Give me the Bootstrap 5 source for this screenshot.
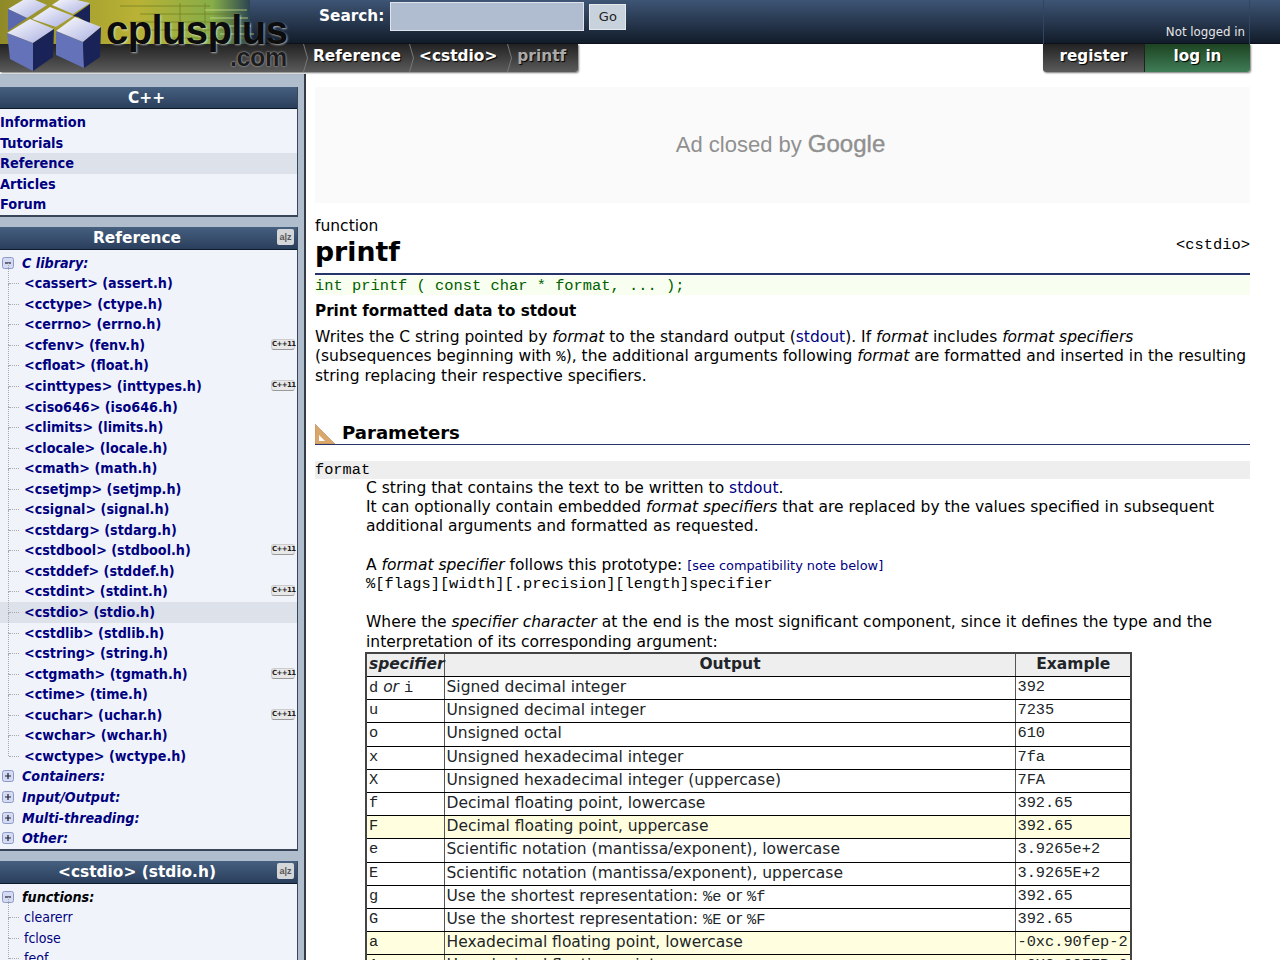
<!DOCTYPE html>
<html lang="en">
<head>
<meta charset="utf-8">
<title>printf - C++ Reference</title>
<link href="https://cdn.jsdelivr.net/npm/bootstrap@5.3.0/dist/css/bootstrap.min.css" rel="stylesheet">
<style>
html,body{height:100%;overflow:hidden}
body{font-family:"DejaVu Sans",Verdana,sans-serif;font-size:15.5px;line-height:19.2px;color:#000;background:#fff}
a{color:#000080;text-decoration:none}
.mono{font-family:"Liberation Mono","Courier New",monospace}
.site-head{height:74px;position:relative}
.top-strip{height:44px;background:linear-gradient(#3e5575,#121c2a);border-bottom:1px solid #0c121b}
.crumb-strip{height:30px}
.logo-art{position:absolute;left:0;top:0;width:300px;height:74px;z-index:2}
.logo-word{position:absolute;left:106px;top:8px;font:700 40px/44px "Liberation Sans",sans-serif;letter-spacing:-.6px;color:#0c0c0c;z-index:3;text-shadow:1px 1px 2px #fff9}
.logo-com{position:absolute;left:230px;top:44px;font:700 25px/27px "Liberation Sans",sans-serif;letter-spacing:-.4px;color:#1c1c1c;z-index:3;text-shadow:0 0 2px #ddd}
.search-box{margin-left:319px;padding-top:2px;gap:5px}
.search-label{color:#fff;font-weight:700;font-size:15.3px;line-height:28px;margin-right:1px}
.search-input.form-control{width:194px;height:29px;border-radius:0;background:#b0bdd0;border:1px solid #dfe4ea;padding:0}
.search-go.btn{width:37px;height:26px;margin-top:2px;border-radius:0;background:#c7d2dc;border:1px solid #e5e9ee;padding:0;font-size:13px;color:#222;line-height:24px}
.login-info{margin-left:auto;margin-right:30px;width:207px;height:44px;border:1px solid #30455f;border-width:0 1px;padding:15px 4px 0;color:#e6e6e6;font-size:11.8px;text-align:right;line-height:34px;box-sizing:border-box}
.grey-bar{width:578px;height:28px;background:linear-gradient(#222,#5b5b5b);box-shadow:1px 1px 2px #0008;border-radius:0 0 3px 0;padding-left:303px}
.crumb-sep{width:5px;height:28px;flex:none}
.crumb-item{color:#fff;font-weight:700;font-size:15.4px;line-height:25px;margin:0 10px 0 5px;text-shadow:1px 1px 1px #000}
.crumb-item.is-first{margin-right:8px}
.crumb-item.is-last{color:#aaa;margin-right:0}
.user-btns{margin-left:auto;margin-right:30px;height:28px;width:207px}
.user-btn{display:block;color:#fff;font-weight:700;font-size:15.2px;line-height:25px;text-align:center;text-shadow:1px 1px 1px #000;box-shadow:1px 1px 2px #0008}
.user-reg{width:102px;background:linear-gradient(#222,#5b5b5b);border-radius:0 0 0 3px;border-right:1px solid #222}
.user-log{width:105px;background:linear-gradient(#1d4322,#3f7d56);border-radius:0 0 3px 0}
.page-cols{height:886px}
.side-col{width:306px;flex:none;background:#b0bdcc;border-right:2px solid #333c47;padding:13px 6px 0 0;overflow:hidden}
.side-card.card{background:#f0f4fa;border:0;border-radius:0;border-right:1.5px solid #39465a;border-bottom:2px solid #39465a;margin-bottom:10px;font-family:"DejaVu Sans Condensed","DejaVu Sans",sans-serif;font-stretch:condensed;font-size:14.4px}
.side-title.card-header{height:22px;background:linear-gradient(#466080,#2a3f5c);border:0;border-bottom:1px solid #0d1a2c;border-radius:0;color:#fff;font-family:"DejaVu Sans",sans-serif;font-stretch:normal;font-weight:700;font-size:15.4px;line-height:22px;padding:0 4px 0 0;text-align:center;position:relative}
.side-title.wide{padding-right:23px;height:23px}
.az-mark{position:absolute;right:3px;top:2px;width:17px;height:16px;background:#d4d6da;border-radius:2px;color:#555;font:700 9px/16px "Liberation Sans",sans-serif;text-align:center}
.side-row{display:block;height:20.56px;line-height:20.56px;font-weight:700;white-space:nowrap;position:relative}
.side-row.is-on{background:#dde2ea}
.side-list{padding:3px 0 0}
.tree-list{padding:3px 0 0;font-size:14.2px}
.tree-group{padding-left:22px;font-style:italic}
.tree-item{padding-left:24px}
.tree-func{padding-left:24px;font-weight:400;font-size:14px}
.tree-item::before,.tree-func::before{content:"";position:absolute;left:8px;top:-10px;height:20.56px;border-left:1px dotted #aaa}
.tree-item::after,.tree-func::after{content:"";position:absolute;left:9px;top:10px;width:10px;border-top:1px dotted #aaa}
.tree-box{position:absolute;left:2px;top:4px;width:12px;height:12px}
.new-tag{position:absolute;right:2px;top:4px;width:24px;height:11px;background:#e8e8e8;border:1px solid #ccc;border-bottom-color:#999;border-radius:3px;font:700 7px/9px "DejaVu Sans",sans-serif;color:#222;text-align:center;font-style:normal;letter-spacing:-.6px}
.main-col{width:935px;margin-left:9px;flex:none;padding-top:13px;overflow:hidden}
.ad-slot{height:116px;background:#fafafa;color:#909090;font:400 22px/114px "Liberation Sans",sans-serif;text-align:center;margin-bottom:14px;padding-right:4px}
.ad-slot b{font-weight:400;font-size:24px;-webkit-text-stroke:.4px #909090}
.kind-line{line-height:18px}
.name-row{height:40px;border-bottom:2px solid #26346a;align-items:flex-end}
.name-text{font-size:26.7px;font-weight:700;line-height:36px;margin:0;padding-bottom:3px}
.head-file{margin-left:auto;font-size:15.4px;line-height:19px;padding-bottom:18px}
.proto-line{height:19px;margin-top:1px;background:#f8fff0;color:#006000;font-size:15.4px;line-height:20px;white-space:pre}
.brief-line{font-size:15.2px;font-weight:700;line-height:20px;margin:6px 0 7px}
.body-para{margin:0 0 34px}
.sec-head{border-bottom:1px solid #26346a;gap:7px;margin-bottom:16px;height:24px;align-items:flex-end}
.sec-title{font-size:18.1px;line-height:22px;font-weight:700;margin:0}
.param-name{background:#eee;height:18px;font-size:15.3px;line-height:18px}
.param-body{padding-left:51px}
.param-body p{margin:0}
.gap-blank{height:19.4px}
.small-note{font-size:12.9px}
.fmt-line{font-size:15.4px}
.spec-table.table{width:765px;margin:0 0 0 -1px;border:2px solid #444;--bs-table-border-color:#000;font-size:15.5px;line-height:19.2px;table-layout:fixed}
.spec-table.table>*>tr>*{padding:1px 1px 2px 2px;border:1px solid #000;vertical-align:middle;border-left-color:#555;border-right-color:#555}
.spec-table th{background:#eee;font-weight:700;text-align:center}
.spec-table .c-mono{font-family:"Liberation Mono",monospace;font-size:15.3px;line-height:1}
.spec-table tr.pale>td{background:#ffffe0}
.spec-table .ex-cell{font-family:"Liberation Mono",monospace;font-size:15.3px}
</style>
</head>
<body>
<header class="site-head">
  <svg class="logo-art" viewBox="0 0 300 74" aria-hidden="true">
    <defs>
      <linearGradient id="lgbg" x1="0" x2="1" y1="0" y2="0"><stop offset="0" stop-color="#8f8a28"/><stop offset=".55" stop-color="#b9b235"/><stop offset=".85" stop-color="#86ad48"/><stop offset="1" stop-color="#2b4452"/></linearGradient>
      <linearGradient id="lgtop" x1="0" x2="1" y1="0" y2="1"><stop offset="0" stop-color="#fff"/><stop offset="1" stop-color="#a9aee0"/></linearGradient>
      <linearGradient id="lgbar" x1="0" x2="0" y1="0" y2="1"><stop offset="0" stop-color="#222"/><stop offset="1" stop-color="#5b5b5b"/></linearGradient>
    </defs>
    <rect x="0" y="0" width="250" height="44" fill="url(#lgbg)"/>
    <rect x="0" y="44" width="300" height="28" fill="url(#lgbar)"/>
    <path d="M120 6h90M140 14h100M130 22h110M150 30h92M170 38h75M180 3v30M205 3v36" stroke="#6f7a20" stroke-width="1" fill="none" opacity=".7"/>
    <path d="M205 10h42M210 18h38M215 26h36M220 34h34" stroke="#d9e88a" stroke-width="1" fill="none" opacity=".7"/>
    <polygon points="8,9 28,-3 47,5 27,18" fill="url(#lgtop)"/>
    <polygon points="8,9 27,18 8,31" fill="#5a68b0"/>
    <polygon points="52,5 64,-3 90,3 73,14" fill="url(#lgtop)"/>
    <polygon points="73,16 90,4 90,24 78,17" fill="#1a2358"/>
    <polygon points="32,19 50,7 73,16 56,27" fill="url(#lgtop)"/>
    <polygon points="7,33 30,19 54,29 33,43" fill="url(#lgtop)"/>
    <polygon points="7,33 33,43 33,71 10,59" fill="#6472ba"/>
    <polygon points="33,43 54,29 53,57 33,71" fill="#1a2358"/>
    <polygon points="56,31 75,17 101,27 83,42" fill="url(#lgtop)"/>
    <polygon points="56,31 83,42 84,68 56,55" fill="#6472ba"/>
    <polygon points="83,42 101,27 100,57 84,68" fill="#1a2358"/>
  </svg>
  <div class="logo-word">cplusplus</div>
  <div class="logo-com">.com</div>
  <div class="top-strip d-flex">
    <form class="search-box d-flex align-items-start">
      <label class="search-label" for="q">Search:</label>
      <input id="q" class="search-input form-control" type="text" aria-label="Search">
      <button class="search-go btn" type="button">Go</button>
    </form>
    <div class="login-info">Not logged in</div>
  </div>
  <div class="crumb-strip d-flex">
    <nav class="grey-bar d-flex">
      <svg class="crumb-sep" viewBox="0 0 5 28" aria-hidden="true"><path d="M.5 0L4.5 14L.5 28" fill="none" stroke="#777"/></svg>
      <a class="crumb-item is-first" href="#">Reference</a>
      <svg class="crumb-sep" viewBox="0 0 5 28" aria-hidden="true"><path d="M.5 0L4.5 14L.5 28" fill="none" stroke="#777"/></svg>
      <a class="crumb-item" href="#">&lt;cstdio&gt;</a>
      <svg class="crumb-sep" viewBox="0 0 5 28" aria-hidden="true"><path d="M.5 0L4.5 14L.5 28" fill="none" stroke="#777"/></svg>
      <a class="crumb-item is-last" href="#">printf</a>
    </nav>
    <div class="user-btns d-flex">
      <a class="user-btn user-reg" href="#">register</a>
      <a class="user-btn user-log" href="#">log in</a>
    </div>
  </div>
</header>
<div class="page-cols d-flex">
  <aside class="side-col">
    <section class="side-card card">
      <div class="side-title card-header">C++</div>
      <div class="side-list">
        <a class="side-row" href="#">Information</a>
        <a class="side-row" href="#">Tutorials</a>
        <a class="side-row is-on" href="#">Reference</a>
        <a class="side-row" href="#">Articles</a>
        <a class="side-row" href="#">Forum</a>
      </div>
    </section>
    <section class="side-card card">
      <div class="side-title wide card-header">Reference<span class="az-mark">a|z</span></div>
      <div class="tree-list">
        <a class="side-row tree-group" href="#"><svg class="tree-box" viewBox="0 0 12 12"><rect x=".5" y=".5" width="11" height="11" rx="2" fill="#d3daf2" stroke="#8c9ac8"/><path d="M3 6h6" stroke="#223" stroke-width="1.2"/></svg>C library:</a>
        <a class="side-row tree-item" href="#">&lt;cassert&gt; (assert.h)</a>
        <a class="side-row tree-item" href="#">&lt;cctype&gt; (ctype.h)</a>
        <a class="side-row tree-item" href="#">&lt;cerrno&gt; (errno.h)</a>
        <a class="side-row tree-item" href="#">&lt;cfenv&gt; (fenv.h)<span class="new-tag">C++11</span></a>
        <a class="side-row tree-item" href="#">&lt;cfloat&gt; (float.h)</a>
        <a class="side-row tree-item" href="#">&lt;cinttypes&gt; (inttypes.h)<span class="new-tag">C++11</span></a>
        <a class="side-row tree-item" href="#">&lt;ciso646&gt; (iso646.h)</a>
        <a class="side-row tree-item" href="#">&lt;climits&gt; (limits.h)</a>
        <a class="side-row tree-item" href="#">&lt;clocale&gt; (locale.h)</a>
        <a class="side-row tree-item" href="#">&lt;cmath&gt; (math.h)</a>
        <a class="side-row tree-item" href="#">&lt;csetjmp&gt; (setjmp.h)</a>
        <a class="side-row tree-item" href="#">&lt;csignal&gt; (signal.h)</a>
        <a class="side-row tree-item" href="#">&lt;cstdarg&gt; (stdarg.h)</a>
        <a class="side-row tree-item" href="#">&lt;cstdbool&gt; (stdbool.h)<span class="new-tag">C++11</span></a>
        <a class="side-row tree-item" href="#">&lt;cstddef&gt; (stddef.h)</a>
        <a class="side-row tree-item" href="#">&lt;cstdint&gt; (stdint.h)<span class="new-tag">C++11</span></a>
        <a class="side-row tree-item is-on" href="#">&lt;cstdio&gt; (stdio.h)</a>
        <a class="side-row tree-item" href="#">&lt;cstdlib&gt; (stdlib.h)</a>
        <a class="side-row tree-item" href="#">&lt;cstring&gt; (string.h)</a>
        <a class="side-row tree-item" href="#">&lt;ctgmath&gt; (tgmath.h)<span class="new-tag">C++11</span></a>
        <a class="side-row tree-item" href="#">&lt;ctime&gt; (time.h)</a>
        <a class="side-row tree-item" href="#">&lt;cuchar&gt; (uchar.h)<span class="new-tag">C++11</span></a>
        <a class="side-row tree-item" href="#">&lt;cwchar&gt; (wchar.h)</a>
        <a class="side-row tree-item" href="#">&lt;cwctype&gt; (wctype.h)</a>
        <a class="side-row tree-group" href="#"><svg class="tree-box" viewBox="0 0 12 12"><rect x=".5" y=".5" width="11" height="11" rx="2" fill="#d3daf2" stroke="#8c9ac8"/><path d="M3 6h6M6 3v6" stroke="#223" stroke-width="1.2"/></svg>Containers:</a>
        <a class="side-row tree-group" href="#"><svg class="tree-box" viewBox="0 0 12 12"><rect x=".5" y=".5" width="11" height="11" rx="2" fill="#d3daf2" stroke="#8c9ac8"/><path d="M3 6h6M6 3v6" stroke="#223" stroke-width="1.2"/></svg>Input/Output:</a>
        <a class="side-row tree-group" href="#"><svg class="tree-box" viewBox="0 0 12 12"><rect x=".5" y=".5" width="11" height="11" rx="2" fill="#d3daf2" stroke="#8c9ac8"/><path d="M3 6h6M6 3v6" stroke="#223" stroke-width="1.2"/></svg>Multi-threading:</a>
        <a class="side-row tree-group" href="#"><svg class="tree-box" viewBox="0 0 12 12"><rect x=".5" y=".5" width="11" height="11" rx="2" fill="#d3daf2" stroke="#8c9ac8"/><path d="M3 6h6M6 3v6" stroke="#223" stroke-width="1.2"/></svg>Other:</a>
      </div>
    </section>
    <section class="side-card card">
      <div class="side-title wide card-header">&lt;cstdio&gt; (stdio.h)<span class="az-mark">a|z</span></div>
      <div class="tree-list">
        <a class="side-row tree-group text-black" href="#"><svg class="tree-box" viewBox="0 0 12 12"><rect x=".5" y=".5" width="11" height="11" rx="2" fill="#d3daf2" stroke="#8c9ac8"/><path d="M3 6h6" stroke="#223" stroke-width="1.2"/></svg>functions:</a>
        <a class="side-row tree-func" href="#">clearerr</a>
        <a class="side-row tree-func" href="#">fclose</a>
        <a class="side-row tree-func" href="#">feof</a>
      </div>
    </section>
  </aside>
  <main class="main-col">
    <div class="ad-slot">Ad closed by <b>Google</b></div>
    <div class="kind-line">function</div>
    <div class="name-row d-flex">
      <h1 class="name-text">printf</h1>
      <div class="head-file mono">&lt;cstdio&gt;</div>
    </div>
    <div class="proto-line mono">int printf ( const char * format, ... );</div>
    <div class="brief-line">Print formatted data to stdout</div>
    <p class="body-para">Writes the C string pointed by <i>format</i> to the standard output (<a href="#">stdout</a>). If <i>format</i> includes <i>format specifiers</i> (subsequences beginning with <span class="mono">%</span>), the additional arguments following <i>format</i> are formatted and inserted in the resulting string replacing their respective specifiers.</p>
    <div class="sec-head d-flex">
      <svg width="20" height="20" viewBox="0 0 20 20" aria-hidden="true"><polygon points="0,0 20,20 0,20" fill="#d9a66c" stroke="#b5824a" stroke-width=".5"/><polygon points="4,11 10,17 4,17" fill="#fff"/></svg>
      <h2 class="sec-title">Parameters</h2>
    </div>
    <div class="param-name mono">format</div>
    <div class="param-body">
      <p>C string that contains the text to be written to <a href="#">stdout</a>.</p>
      <p>It can optionally contain embedded <i>format specifiers</i> that are replaced by the values specified in subsequent additional arguments and formatted as requested.</p>
      <div class="gap-blank"></div>
      <p>A <i>format specifier</i> follows this prototype: <a class="small-note" href="#">[see compatibility note below]</a></p>
      <p class="mono fmt-line">%[flags][width][.precision][length]specifier</p>
      <div class="gap-blank"></div>
      <p>Where the <i>specifier character</i> at the end is the most significant component, since it defines the type and the interpretation of its corresponding argument:</p>
      <table class="spec-table table">
        <colgroup><col style="width:78px"><col style="width:571px"><col style="width:116px"></colgroup>
        <thead><tr><th><i>specifier</i></th><th>Output</th><th>Example</th></tr></thead>
        <tbody>
          <tr><td><span class="c-mono">d</span> <i>or</i> <span class="c-mono">i</span></td><td>Signed decimal integer</td><td class="ex-cell">392</td></tr>
          <tr><td class="c-mono">u</td><td>Unsigned decimal integer</td><td class="ex-cell">7235</td></tr>
          <tr><td class="c-mono">o</td><td>Unsigned octal</td><td class="ex-cell">610</td></tr>
          <tr><td class="c-mono">x</td><td>Unsigned hexadecimal integer</td><td class="ex-cell">7fa</td></tr>
          <tr><td class="c-mono">X</td><td>Unsigned hexadecimal integer (uppercase)</td><td class="ex-cell">7FA</td></tr>
          <tr><td class="c-mono">f</td><td>Decimal floating point, lowercase</td><td class="ex-cell">392.65</td></tr>
          <tr class="pale"><td class="c-mono">F</td><td>Decimal floating point, uppercase</td><td class="ex-cell">392.65</td></tr>
          <tr><td class="c-mono">e</td><td>Scientific notation (mantissa/exponent), lowercase</td><td class="ex-cell">3.9265e+2</td></tr>
          <tr><td class="c-mono">E</td><td>Scientific notation (mantissa/exponent), uppercase</td><td class="ex-cell">3.9265E+2</td></tr>
          <tr><td class="c-mono">g</td><td>Use the shortest representation: <span class="c-mono">%e</span> or <span class="c-mono">%f</span></td><td class="ex-cell">392.65</td></tr>
          <tr><td class="c-mono">G</td><td>Use the shortest representation: <span class="c-mono">%E</span> or <span class="c-mono">%F</span></td><td class="ex-cell">392.65</td></tr>
          <tr class="pale"><td class="c-mono">a</td><td>Hexadecimal floating point, lowercase</td><td class="ex-cell">-0xc.90fep-2</td></tr>
          <tr class="pale"><td class="c-mono">A</td><td>Hexadecimal floating point, uppercase</td><td class="ex-cell">-0XC.90FEP-2</td></tr>
        </tbody>
      </table>
    </div>
  </main>
</div>
<script src="https://cdn.jsdelivr.net/npm/bootstrap@5.3.0/dist/js/bootstrap.bundle.min.js"></script>
</body>
</html>
